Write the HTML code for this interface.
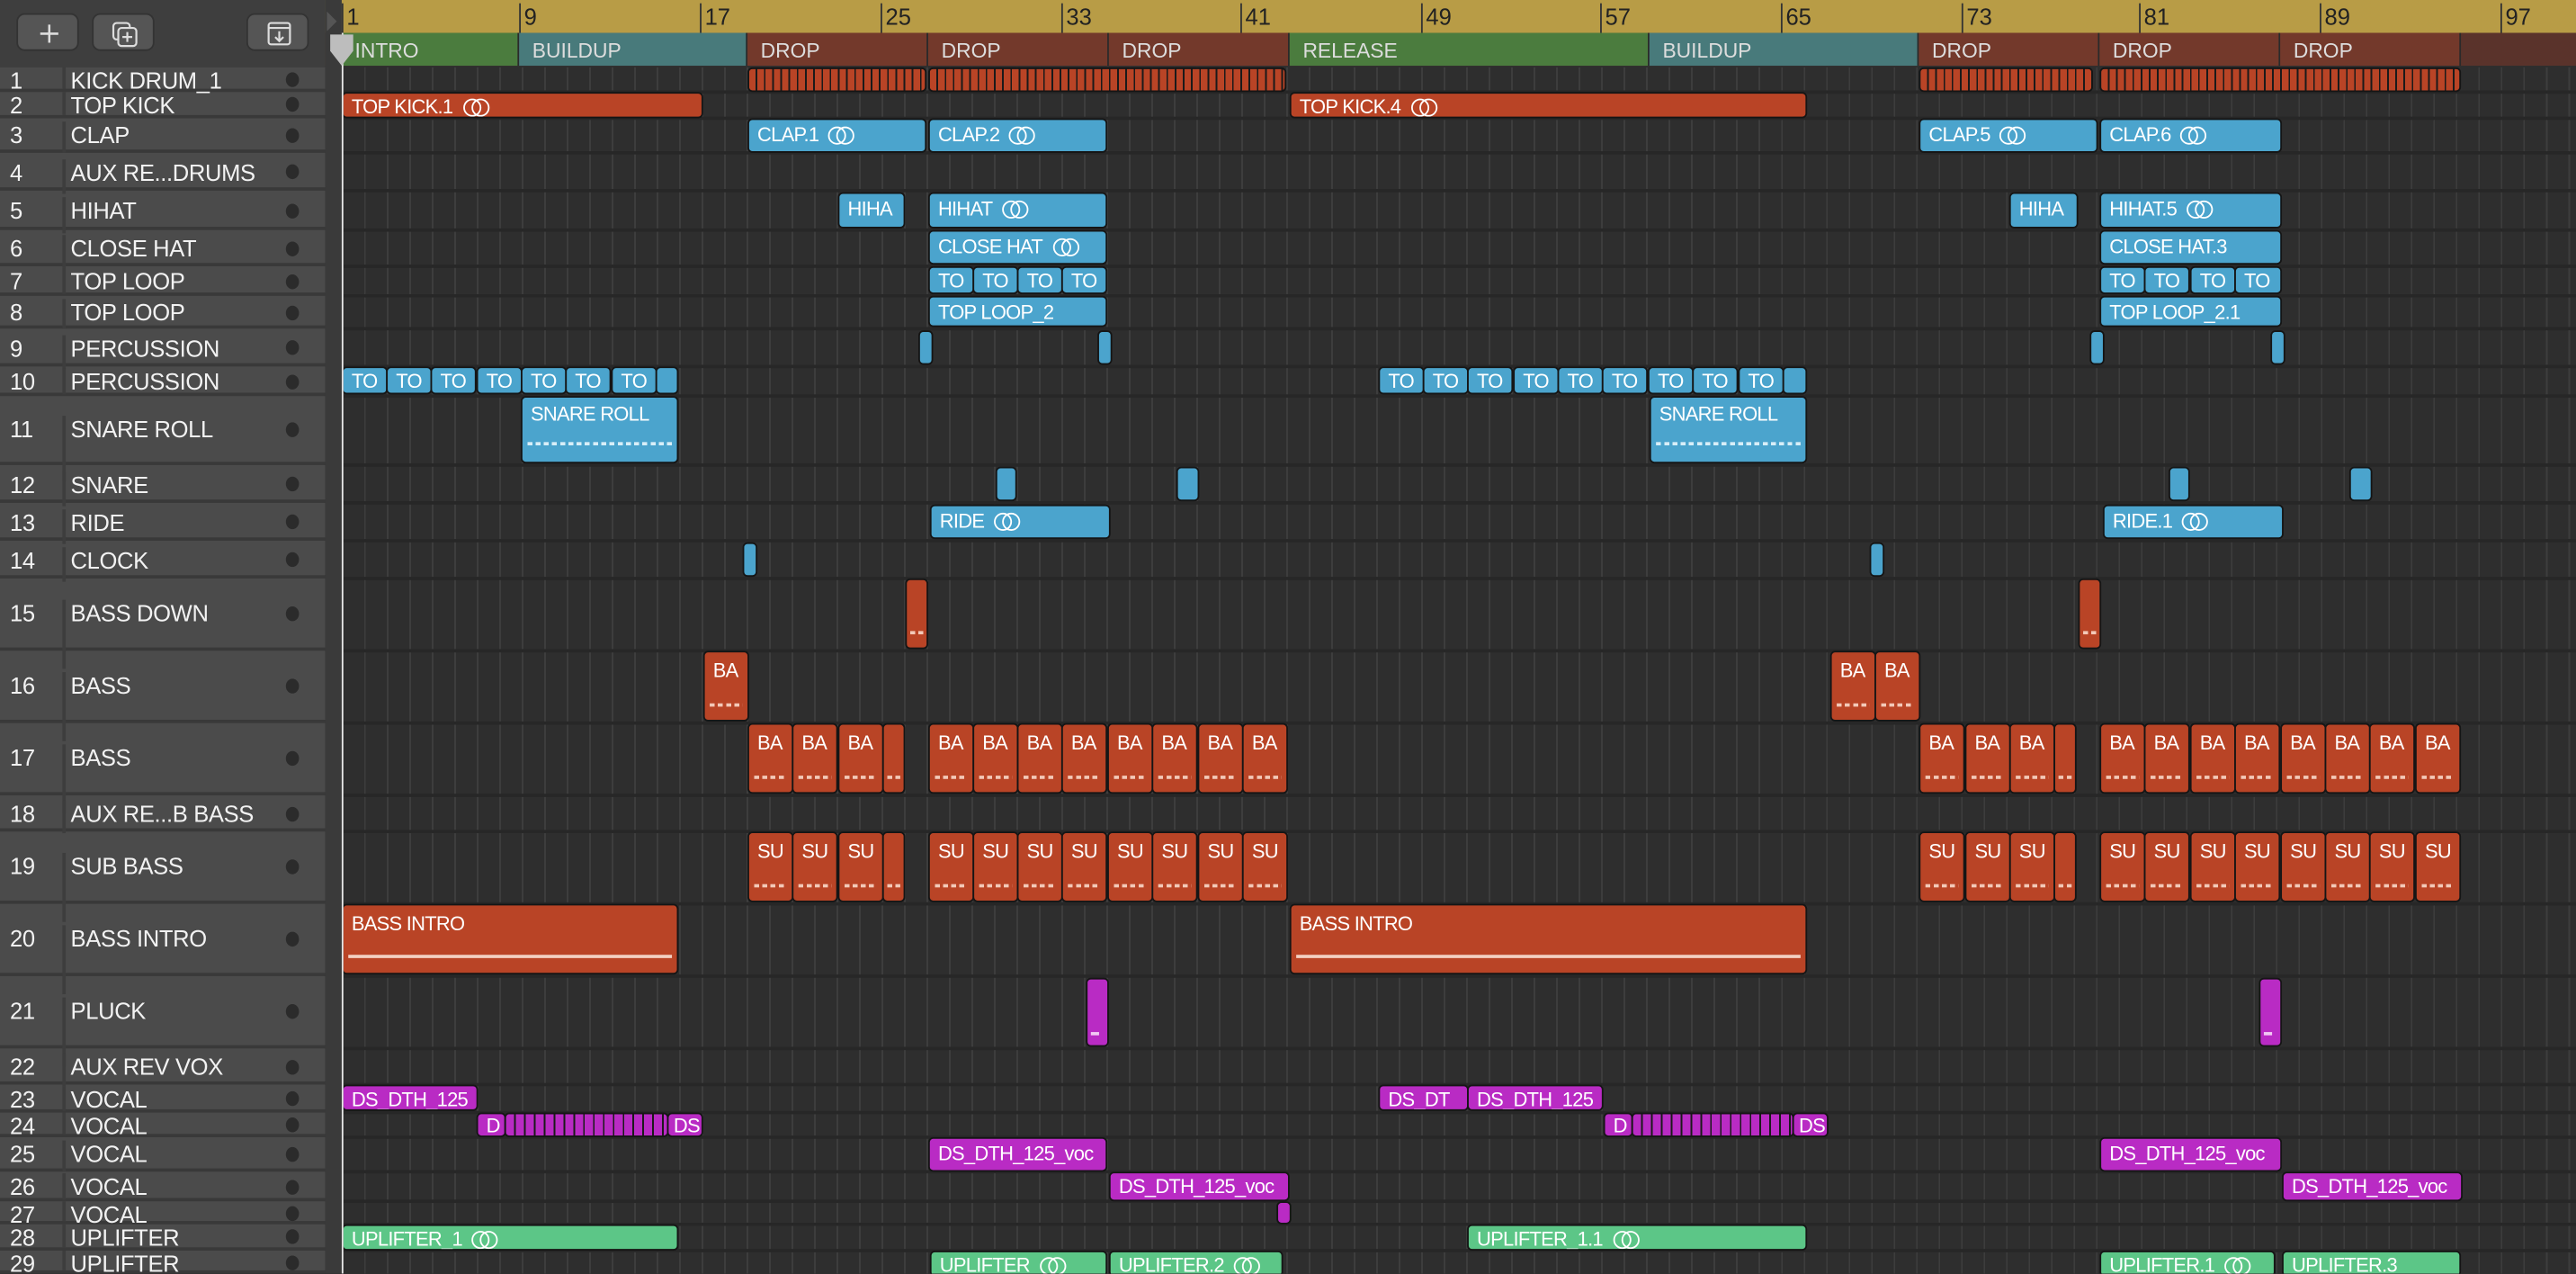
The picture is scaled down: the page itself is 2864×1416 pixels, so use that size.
<!DOCTYPE html>
<html><head><meta charset="utf-8"><style>
*{margin:0;padding:0;box-sizing:border-box}
html,body{width:2864px;height:1416px;overflow:hidden;background:#2e2e2e}
#w{position:absolute;left:0;top:0;width:1568px;height:775px;transform:scale(1.82653);transform-origin:0 0;font-family:"Liberation Sans",sans-serif;overflow:hidden}
.grid{position:absolute;left:208px;top:41px;width:1360px;height:734px;background:repeating-linear-gradient(90deg,#3d3d3d 0 1px,transparent 1px 13.69px)}
.rl{position:absolute;left:198px;width:1370px;height:2px;background:#272727}
.lp{position:absolute;left:0;top:0;width:198px;height:775px;background:#4b4b4b}
.hd{position:absolute;left:0;top:0;width:198px;height:41px;background:#3e3e3e}
.btn{position:absolute;top:8px;height:23px;width:38px;border-radius:5px;background:#555;border:1px solid #333}
.tr{position:absolute;left:0;width:198px;color:#f2f2f2;font-size:14px;letter-spacing:-0.2px;border-bottom:2px solid #393939}
.tr .n{position:absolute;left:0;width:40px;text-align:left;padding-left:6px;height:100%;border-right:2px solid #3d3d3d}
.tr .t{position:absolute;left:43px;white-space:nowrap}
.tr .d{position:absolute;left:174px;width:8px;height:9px;border-radius:50%;background:#2b2b2b}
.c{position:absolute;border-radius:3px;border:1px solid #151515;color:#fff;font-size:12px;letter-spacing:-0.4px;padding:2px 0 0 5px;white-space:nowrap;overflow:hidden;line-height:14px}
.r{background:#b94426}.b{background:#4ba4cd}.p{background:#b92bc4}.g{background:#5cc687}
.lo{display:inline-block;width:14px;height:10px;position:relative;margin-left:6px;vertical-align:-1px}
.lo:before,.lo:after{content:"";position:absolute;top:0;width:9px;height:9px;border:1.3px solid #fff;border-radius:50%}
.lo:before{left:0}.lo:after{left:5px}
.sec{position:absolute;top:20px;height:20px;color:#ddd;font-size:12.5px;padding:4px 0 0 8px;border-right:1px solid #2a2a2a}
.ml{position:absolute;top:2px;font-size:14px;color:#222}
.mt{position:absolute;top:2px;width:1px;height:18px;background:#333}
.st{background-image:repeating-linear-gradient(90deg,#b94426 0 4px,#1a1a1a 4px 5px)}
.dash{position:absolute;left:3px;right:3px;bottom:8px;height:2px;background:repeating-linear-gradient(90deg,#f3c9b8 0 3px,transparent 3px 5px)}
</style></head><body><div id="w">
<div class="grid"></div>
<div style="position:absolute;left:198px;top:0;width:1370px;height:20px;background:#b89c46"></div>
<div class="mt" style="left:208px"></div><div class="ml" style="left:211px">1</div>
<div class="mt" style="left:316px"></div><div class="ml" style="left:319px">9</div>
<div class="mt" style="left:426px"></div><div class="ml" style="left:429px">17</div>
<div class="mt" style="left:536px"></div><div class="ml" style="left:539px">25</div>
<div class="mt" style="left:646px"></div><div class="ml" style="left:649px">33</div>
<div class="mt" style="left:755px"></div><div class="ml" style="left:758px">41</div>
<div class="mt" style="left:865px"></div><div class="ml" style="left:868px">49</div>
<div class="mt" style="left:974px"></div><div class="ml" style="left:977px">57</div>
<div class="mt" style="left:1084px"></div><div class="ml" style="left:1087px">65</div>
<div class="mt" style="left:1194px"></div><div class="ml" style="left:1197px">73</div>
<div class="mt" style="left:1302px"></div><div class="ml" style="left:1305px">81</div>
<div class="mt" style="left:1412px"></div><div class="ml" style="left:1415px">89</div>
<div class="mt" style="left:1522px"></div><div class="ml" style="left:1525px">97</div>
<div style="position:absolute;left:198px;top:20px;width:1370px;height:20px;background:#5a332b"></div>
<div class="sec" style="left:208px;width:108px;background:#4b7c3e">INTRO</div>
<div class="sec" style="left:316px;width:139px;background:#487a7b">BUILDUP</div>
<div class="sec" style="left:455px;width:110px;background:#73392b">DROP</div>
<div class="sec" style="left:565px;width:110px;background:#73392b">DROP</div>
<div class="sec" style="left:675px;width:110px;background:#73392b">DROP</div>
<div class="sec" style="left:785px;width:219px;background:#4b7c3e">RELEASE</div>
<div class="sec" style="left:1004px;width:164px;background:#487a7b">BUILDUP</div>
<div class="sec" style="left:1168px;width:110px;background:#73392b">DROP</div>
<div class="sec" style="left:1278px;width:110px;background:#73392b">DROP</div>
<div class="sec" style="left:1388px;width:110px;background:#73392b">DROP</div>
<div class="rl" style="top:55px"></div><div class="rl" style="top:71px"></div><div class="rl" style="top:92px"></div><div class="rl" style="top:115px"></div><div class="rl" style="top:139px"></div><div class="rl" style="top:161px"></div><div class="rl" style="top:179px"></div><div class="rl" style="top:199px"></div><div class="rl" style="top:222px"></div><div class="rl" style="top:240px"></div><div class="rl" style="top:282px"></div><div class="rl" style="top:305px"></div><div class="rl" style="top:328px"></div><div class="rl" style="top:351px"></div><div class="rl" style="top:395px"></div><div class="rl" style="top:439px"></div><div class="rl" style="top:483px"></div><div class="rl" style="top:505px"></div><div class="rl" style="top:549px"></div><div class="rl" style="top:593px"></div><div class="rl" style="top:637px"></div><div class="rl" style="top:659px"></div><div class="rl" style="top:676px"></div><div class="rl" style="top:691px"></div><div class="rl" style="top:712px"></div><div class="rl" style="top:730px"></div><div class="rl" style="top:744px"></div><div class="rl" style="top:760px"></div>
<div class="lp"></div>
<div class="hd"></div>
<div class="btn" style="left:10px"><svg width="38" height="23"><path d="M19 6v11M13.5 11.5h11" stroke="#ddd" stroke-width="1.4"/></svg></div>
<div class="btn" style="left:56px"><svg width="38" height="23"><rect x="12" y="5" width="10" height="10" rx="2" fill="none" stroke="#ddd" stroke-width="1.2"/><rect x="15" y="8" width="11" height="11" rx="2" fill="#555" stroke="#ddd" stroke-width="1.2"/><path d="M20.5 10.5v6M17.5 13.5h6" stroke="#ddd" stroke-width="1.2"/></svg></div>
<div class="btn" style="left:150px"><svg width="38" height="23"><rect x="12.5" y="5" width="13" height="13" rx="1.5" fill="none" stroke="#ddd" stroke-width="1.2"/><path d="M12.5 8h13M19 10v6M16.5 13.5l2.5 2.5 2.5-2.5" fill="none" stroke="#ddd" stroke-width="1.2"/></svg></div>
<div style="position:absolute;left:198px;top:0;width:10px;height:775px;background:#3a3a3a"></div>

<div class="tr" style="top:41px;height:15px"><span class="n">1</span><span class="t">KICK DRUM_1</span><span class="d" style="top:3px"></span></div>
<div class="tr" style="top:56px;height:16px"><span class="n">2</span><span class="t">TOP KICK</span><span class="d" style="top:3px"></span></div>
<div class="tr" style="top:72px;height:21px;padding-top:2px"><span class="n">3</span><span class="t">CLAP</span><span class="d" style="top:6px"></span></div>
<div class="tr" style="top:93px;height:23px;padding-top:4px"><span class="n">4</span><span class="t">AUX RE...DRUMS</span><span class="d" style="top:7px"></span></div>
<div class="tr" style="top:116px;height:24px;padding-top:4px"><span class="n">5</span><span class="t">HIHAT</span><span class="d" style="top:8px"></span></div>
<div class="tr" style="top:140px;height:22px;padding-top:3px"><span class="n">6</span><span class="t">CLOSE HAT</span><span class="d" style="top:7px"></span></div>
<div class="tr" style="top:162px;height:18px;padding-top:1px"><span class="n">7</span><span class="t">TOP LOOP</span><span class="d" style="top:5px"></span></div>
<div class="tr" style="top:180px;height:20px;padding-top:2px"><span class="n">8</span><span class="t">TOP LOOP</span><span class="d" style="top:6px"></span></div>
<div class="tr" style="top:200px;height:23px;padding-top:4px"><span class="n">9</span><span class="t">PERCUSSION</span><span class="d" style="top:7px"></span></div>
<div class="tr" style="top:223px;height:18px;padding-top:1px"><span class="n">10</span><span class="t">PERCUSSION</span><span class="d" style="top:5px"></span></div>
<div class="tr" style="top:241px;height:42px;padding-top:12px"><span class="n">11</span><span class="t">SNARE ROLL</span><span class="d" style="top:16px"></span></div>
<div class="tr" style="top:283px;height:23px;padding-top:4px"><span class="n">12</span><span class="t">SNARE</span><span class="d" style="top:7px"></span></div>
<div class="tr" style="top:306px;height:23px;padding-top:4px"><span class="n">13</span><span class="t">RIDE</span><span class="d" style="top:7px"></span></div>
<div class="tr" style="top:329px;height:23px;padding-top:4px"><span class="n">14</span><span class="t">CLOCK</span><span class="d" style="top:7px"></span></div>
<div class="tr" style="top:352px;height:44px;padding-top:13px"><span class="n">15</span><span class="t">BASS DOWN</span><span class="d" style="top:17px"></span></div>
<div class="tr" style="top:396px;height:44px;padding-top:13px"><span class="n">16</span><span class="t">BASS</span><span class="d" style="top:17px"></span></div>
<div class="tr" style="top:440px;height:44px;padding-top:13px"><span class="n">17</span><span class="t">BASS</span><span class="d" style="top:17px"></span></div>
<div class="tr" style="top:484px;height:22px;padding-top:3px"><span class="n">18</span><span class="t">AUX RE...B BASS</span><span class="d" style="top:7px"></span></div>
<div class="tr" style="top:506px;height:44px;padding-top:13px"><span class="n">19</span><span class="t">SUB BASS</span><span class="d" style="top:17px"></span></div>
<div class="tr" style="top:550px;height:44px;padding-top:13px"><span class="n">20</span><span class="t">BASS INTRO</span><span class="d" style="top:17px"></span></div>
<div class="tr" style="top:594px;height:44px;padding-top:13px"><span class="n">21</span><span class="t">PLUCK</span><span class="d" style="top:17px"></span></div>
<div class="tr" style="top:638px;height:22px;padding-top:3px"><span class="n">22</span><span class="t">AUX REV VOX</span><span class="d" style="top:7px"></span></div>
<div class="tr" style="top:660px;height:17px;padding-top:1px"><span class="n">23</span><span class="t">VOCAL</span><span class="d" style="top:4px"></span></div>
<div class="tr" style="top:677px;height:15px"><span class="n">24</span><span class="t">VOCAL</span><span class="d" style="top:3px"></span></div>
<div class="tr" style="top:692px;height:21px;padding-top:2px"><span class="n">25</span><span class="t">VOCAL</span><span class="d" style="top:6px"></span></div>
<div class="tr" style="top:713px;height:18px;padding-top:1px"><span class="n">26</span><span class="t">VOCAL</span><span class="d" style="top:5px"></span></div>
<div class="tr" style="top:731px;height:14px"><span class="n">27</span><span class="t">VOCAL</span><span class="d" style="top:3px"></span></div>
<div class="tr" style="top:745px;height:16px"><span class="n">28</span><span class="t">UPLIFTER</span><span class="d" style="top:3px"></span></div>
<div class="tr" style="top:761px;height:14px"><span class="n">29</span><span class="t">UPLIFTER</span><span class="d" style="top:3px"></span></div>

<div class="c st" style="left:455px;top:41px;width:109px;height:15px"></div>
<div class="c st" style="left:565px;top:41px;width:218px;height:15px"></div>
<div class="c st" style="left:1168px;top:41px;width:106px;height:15px"></div>
<div class="c st" style="left:1278px;top:41px;width:220px;height:15px"></div>

<div class="c r" style="left:208px;top:56px;width:220px;height:16px;padding-top:1px">TOP KICK.1<span class="lo"></span></div>
<div class="c r" style="left:785px;top:56px;width:315px;height:16px;padding-top:1px">TOP KICK.4<span class="lo"></span></div>

<div class="c b" style="left:455px;top:72px;width:109px;height:21px">CLAP.1<span class="lo"></span></div>
<div class="c b" style="left:565px;top:72px;width:109px;height:21px">CLAP.2<span class="lo"></span></div>
<div class="c b" style="left:1168px;top:72px;width:109px;height:21px">CLAP.5<span class="lo"></span></div>
<div class="c b" style="left:1278px;top:72px;width:111px;height:21px">CLAP.6<span class="lo"></span></div>

<div class="c b" style="left:510px;top:117px;width:41px;height:22px">HIHA</div>
<div class="c b" style="left:565px;top:117px;width:109px;height:22px">HIHAT<span class="lo"></span></div>
<div class="c b" style="left:1223px;top:117px;width:42px;height:22px">HIHA</div>
<div class="c b" style="left:1278px;top:117px;width:111px;height:22px">HIHAT.5<span class="lo"></span></div>

<div class="c b" style="left:565px;top:140px;width:109px;height:21px">CLOSE HAT<span class="lo"></span></div>
<div class="c b" style="left:1278px;top:140px;width:111px;height:21px">CLOSE HAT.3</div>

<div class="c b" style="left:565px;top:162px;width:28px;height:17px;padding-top:1px">TO</div>
<div class="c b" style="left:592px;top:162px;width:28px;height:17px;padding-top:1px">TO</div>
<div class="c b" style="left:619px;top:162px;width:28px;height:17px;padding-top:1px">TO</div>
<div class="c b" style="left:646px;top:162px;width:28px;height:17px;padding-top:1px">TO</div>
<div class="c b" style="left:1278px;top:162px;width:28px;height:17px;padding-top:1px">TO</div>
<div class="c b" style="left:1305px;top:162px;width:28px;height:17px;padding-top:1px">TO</div>
<div class="c b" style="left:1333px;top:162px;width:28px;height:17px;padding-top:1px">TO</div>
<div class="c b" style="left:1360px;top:162px;width:29px;height:17px;padding-top:1px">TO</div>

<div class="c b" style="left:565px;top:180px;width:109px;height:19px">TOP LOOP_2</div>
<div class="c b" style="left:1278px;top:180px;width:111px;height:19px">TOP LOOP_2.1</div>

<div class="c b" style="left:559px;top:201px;width:9px;height:21px"></div>
<div class="c b" style="left:668px;top:201px;width:9px;height:21px"></div>
<div class="c b" style="left:1272px;top:201px;width:9px;height:21px"></div>
<div class="c b" style="left:1382px;top:201px;width:9px;height:21px"></div>

<div class="c b" style="left:208px;top:223px;width:28px;height:17px;padding-top:1px">TO</div>
<div class="c b" style="left:235px;top:223px;width:28px;height:17px;padding-top:1px">TO</div>
<div class="c b" style="left:262px;top:223px;width:28px;height:17px;padding-top:1px">TO</div>
<div class="c b" style="left:290px;top:223px;width:28px;height:17px;padding-top:1px">TO</div>
<div class="c b" style="left:317px;top:223px;width:28px;height:17px;padding-top:1px">TO</div>
<div class="c b" style="left:344px;top:223px;width:28px;height:17px;padding-top:1px">TO</div>
<div class="c b" style="left:372px;top:223px;width:28px;height:17px;padding-top:1px">TO</div>
<div class="c b" style="left:399px;top:223px;width:14px;height:17px"></div>
<div class="c b" style="left:839px;top:223px;width:28px;height:17px;padding-top:1px">TO</div>
<div class="c b" style="left:866px;top:223px;width:28px;height:17px;padding-top:1px">TO</div>
<div class="c b" style="left:893px;top:223px;width:28px;height:17px;padding-top:1px">TO</div>
<div class="c b" style="left:921px;top:223px;width:28px;height:17px;padding-top:1px">TO</div>
<div class="c b" style="left:948px;top:223px;width:28px;height:17px;padding-top:1px">TO</div>
<div class="c b" style="left:975px;top:223px;width:28px;height:17px;padding-top:1px">TO</div>
<div class="c b" style="left:1003px;top:223px;width:28px;height:17px;padding-top:1px">TO</div>
<div class="c b" style="left:1030px;top:223px;width:28px;height:17px;padding-top:1px">TO</div>
<div class="c b" style="left:1058px;top:223px;width:28px;height:17px;padding-top:1px">TO</div>
<div class="c b" style="left:1085px;top:223px;width:15px;height:17px"></div>

<div class="c b" style="left:317px;top:241px;width:96px;height:41px;padding-top:3px">SNARE ROLL<div class="dash" style="bottom:10px;background:repeating-linear-gradient(90deg,#d8eef8 0 3px,transparent 3px 5px)"></div></div>
<div class="c b" style="left:1004px;top:241px;width:96px;height:41px;padding-top:3px">SNARE ROLL<div class="dash" style="bottom:10px;background:repeating-linear-gradient(90deg,#d8eef8 0 3px,transparent 3px 5px)"></div></div>

<div class="c b" style="left:606px;top:284px;width:13px;height:21px"></div>
<div class="c b" style="left:716px;top:284px;width:14px;height:21px"></div>
<div class="c b" style="left:1320px;top:284px;width:13px;height:21px"></div>
<div class="c b" style="left:1430px;top:284px;width:14px;height:21px"></div>

<div class="c b" style="left:566px;top:307px;width:110px;height:21px">RIDE<span class="lo"></span></div>
<div class="c b" style="left:1280px;top:307px;width:110px;height:21px">RIDE.1<span class="lo"></span></div>

<div class="c b" style="left:452px;top:330px;width:9px;height:21px"></div>
<div class="c b" style="left:1138px;top:330px;width:9px;height:21px"></div>

<div class="c r" style="left:551px;top:352px;width:14px;height:43px"><div class="dash" style="left:2px;right:2px"></div></div>
<div class="c r" style="left:1265px;top:352px;width:14px;height:43px"><div class="dash" style="left:2px;right:2px"></div></div>

<div class="c r" style="left:428px;top:396px;width:28px;height:43px;padding-top:4px">BA<div class="dash"></div></div>
<div class="c r" style="left:1114px;top:396px;width:28px;height:43px;padding-top:4px">BA<div class="dash"></div></div>
<div class="c r" style="left:1141px;top:396px;width:28px;height:43px;padding-top:4px">BA<div class="dash"></div></div>

<div class="c r" style="left:455px;top:440px;width:28px;height:43px;padding-top:4px">BA<div class="dash"></div></div>
<div class="c r" style="left:482px;top:440px;width:28px;height:43px;padding-top:4px">BA<div class="dash"></div></div>
<div class="c r" style="left:510px;top:440px;width:28px;height:43px;padding-top:4px">BA<div class="dash"></div></div>
<div class="c r" style="left:537px;top:440px;width:14px;height:43px"><div class="dash" style="left:2px;right:2px"></div></div>
<div class="c r" style="left:565px;top:440px;width:28px;height:43px;padding-top:4px">BA<div class="dash"></div></div>
<div class="c r" style="left:592px;top:440px;width:28px;height:43px;padding-top:4px">BA<div class="dash"></div></div>
<div class="c r" style="left:619px;top:440px;width:28px;height:43px;padding-top:4px">BA<div class="dash"></div></div>
<div class="c r" style="left:646px;top:440px;width:28px;height:43px;padding-top:4px">BA<div class="dash"></div></div>
<div class="c r" style="left:674px;top:440px;width:28px;height:43px;padding-top:4px">BA<div class="dash"></div></div>
<div class="c r" style="left:701px;top:440px;width:28px;height:43px;padding-top:4px">BA<div class="dash"></div></div>
<div class="c r" style="left:729px;top:440px;width:28px;height:43px;padding-top:4px">BA<div class="dash"></div></div>
<div class="c r" style="left:756px;top:440px;width:28px;height:43px;padding-top:4px">BA<div class="dash"></div></div>
<div class="c r" style="left:1168px;top:440px;width:28px;height:43px;padding-top:4px">BA<div class="dash"></div></div>
<div class="c r" style="left:1196px;top:440px;width:28px;height:43px;padding-top:4px">BA<div class="dash"></div></div>
<div class="c r" style="left:1223px;top:440px;width:28px;height:43px;padding-top:4px">BA<div class="dash"></div></div>
<div class="c r" style="left:1250px;top:440px;width:14px;height:43px"><div class="dash" style="left:2px;right:2px"></div></div>
<div class="c r" style="left:1278px;top:440px;width:28px;height:43px;padding-top:4px">BA<div class="dash"></div></div>
<div class="c r" style="left:1305px;top:440px;width:28px;height:43px;padding-top:4px">BA<div class="dash"></div></div>
<div class="c r" style="left:1333px;top:440px;width:28px;height:43px;padding-top:4px">BA<div class="dash"></div></div>
<div class="c r" style="left:1360px;top:440px;width:28px;height:43px;padding-top:4px">BA<div class="dash"></div></div>
<div class="c r" style="left:1388px;top:440px;width:28px;height:43px;padding-top:4px">BA<div class="dash"></div></div>
<div class="c r" style="left:1415px;top:440px;width:28px;height:43px;padding-top:4px">BA<div class="dash"></div></div>
<div class="c r" style="left:1442px;top:440px;width:28px;height:43px;padding-top:4px">BA<div class="dash"></div></div>
<div class="c r" style="left:1470px;top:440px;width:28px;height:43px;padding-top:4px">BA<div class="dash"></div></div>

<div class="c r" style="left:455px;top:506px;width:28px;height:43px;padding-top:4px">SU<div class="dash"></div></div>
<div class="c r" style="left:482px;top:506px;width:28px;height:43px;padding-top:4px">SU<div class="dash"></div></div>
<div class="c r" style="left:510px;top:506px;width:28px;height:43px;padding-top:4px">SU<div class="dash"></div></div>
<div class="c r" style="left:537px;top:506px;width:14px;height:43px"><div class="dash" style="left:2px;right:2px"></div></div>
<div class="c r" style="left:565px;top:506px;width:28px;height:43px;padding-top:4px">SU<div class="dash"></div></div>
<div class="c r" style="left:592px;top:506px;width:28px;height:43px;padding-top:4px">SU<div class="dash"></div></div>
<div class="c r" style="left:619px;top:506px;width:28px;height:43px;padding-top:4px">SU<div class="dash"></div></div>
<div class="c r" style="left:646px;top:506px;width:28px;height:43px;padding-top:4px">SU<div class="dash"></div></div>
<div class="c r" style="left:674px;top:506px;width:28px;height:43px;padding-top:4px">SU<div class="dash"></div></div>
<div class="c r" style="left:701px;top:506px;width:28px;height:43px;padding-top:4px">SU<div class="dash"></div></div>
<div class="c r" style="left:729px;top:506px;width:28px;height:43px;padding-top:4px">SU<div class="dash"></div></div>
<div class="c r" style="left:756px;top:506px;width:28px;height:43px;padding-top:4px">SU<div class="dash"></div></div>
<div class="c r" style="left:1168px;top:506px;width:28px;height:43px;padding-top:4px">SU<div class="dash"></div></div>
<div class="c r" style="left:1196px;top:506px;width:28px;height:43px;padding-top:4px">SU<div class="dash"></div></div>
<div class="c r" style="left:1223px;top:506px;width:28px;height:43px;padding-top:4px">SU<div class="dash"></div></div>
<div class="c r" style="left:1250px;top:506px;width:14px;height:43px"><div class="dash" style="left:2px;right:2px"></div></div>
<div class="c r" style="left:1278px;top:506px;width:28px;height:43px;padding-top:4px">SU<div class="dash"></div></div>
<div class="c r" style="left:1305px;top:506px;width:28px;height:43px;padding-top:4px">SU<div class="dash"></div></div>
<div class="c r" style="left:1333px;top:506px;width:28px;height:43px;padding-top:4px">SU<div class="dash"></div></div>
<div class="c r" style="left:1360px;top:506px;width:28px;height:43px;padding-top:4px">SU<div class="dash"></div></div>
<div class="c r" style="left:1388px;top:506px;width:28px;height:43px;padding-top:4px">SU<div class="dash"></div></div>
<div class="c r" style="left:1415px;top:506px;width:28px;height:43px;padding-top:4px">SU<div class="dash"></div></div>
<div class="c r" style="left:1442px;top:506px;width:28px;height:43px;padding-top:4px">SU<div class="dash"></div></div>
<div class="c r" style="left:1470px;top:506px;width:28px;height:43px;padding-top:4px">SU<div class="dash"></div></div>

<div class="c r" style="left:208px;top:550px;width:205px;height:43px;padding-top:4px">BASS INTRO<div style="position:absolute;left:3px;right:3px;bottom:9px;height:2px;background:#f3d0c2"></div></div>
<div class="c r" style="left:785px;top:550px;width:315px;height:43px;padding-top:4px">BASS INTRO<div style="position:absolute;left:3px;right:3px;bottom:9px;height:2px;background:#f3d0c2"></div></div>

<div class="c p" style="left:661px;top:595px;width:14px;height:42px"><div style="position:absolute;left:2px;width:5px;bottom:6px;height:2px;background:#f2c8f4"></div></div>
<div class="c p" style="left:1375px;top:595px;width:14px;height:42px"><div style="position:absolute;left:2px;width:5px;bottom:6px;height:2px;background:#f2c8f4"></div></div>

<div class="c p" style="left:208px;top:660px;width:83px;height:16px;padding-top:1px">DS_DTH_125</div>
<div class="c p" style="left:839px;top:660px;width:55px;height:16px;padding-top:1px">DS_DT</div>
<div class="c p" style="left:893px;top:660px;width:83px;height:16px;padding-top:1px">DS_DTH_125</div>

<div class="c p" style="left:290px;top:677px;width:18px;height:15px;padding-top:0">D</div>
<div class="c" style="left:307px;top:677px;width:100px;height:15px;background:repeating-linear-gradient(90deg,#b92bc4 0 5px,#1a1a1a 5px 6px)"></div>
<div class="c p" style="left:406px;top:677px;width:22px;height:15px;padding:0 0 0 3px">DS</div>
<div class="c p" style="left:976px;top:677px;width:18px;height:15px;padding-top:0">D</div>
<div class="c" style="left:993px;top:677px;width:99px;height:15px;background:repeating-linear-gradient(90deg,#b92bc4 0 5px,#1a1a1a 5px 6px)"></div>
<div class="c p" style="left:1091px;top:677px;width:22px;height:15px;padding:0 0 0 3px">DS</div>

<div class="c p" style="left:565px;top:692px;width:109px;height:21px">DS_DTH_125_voc</div>
<div class="c p" style="left:1278px;top:692px;width:111px;height:21px">DS_DTH_125_voc</div>
<div class="c p" style="left:675px;top:713px;width:110px;height:18px;padding-top:1px">DS_DTH_125_voc</div>
<div class="c p" style="left:1389px;top:713px;width:110px;height:18px;padding-top:1px">DS_DTH_125_voc</div>
<div class="c p" style="left:777px;top:731px;width:9px;height:14px"></div>

<div class="c g" style="left:208px;top:745px;width:205px;height:16px;padding-top:1px">UPLIFTER_1<span class="lo"></span></div>
<div class="c g" style="left:893px;top:745px;width:207px;height:16px;padding-top:1px">UPLIFTER_1.1<span class="lo"></span></div>
<div class="c g" style="left:566px;top:761px;width:108px;height:16px;padding-top:1px">UPLIFTER<span class="lo"></span></div>
<div class="c g" style="left:675px;top:761px;width:106px;height:16px;padding-top:1px">UPLIFTER.2<span class="lo"></span></div>
<div class="c g" style="left:1278px;top:761px;width:107px;height:16px;padding-top:1px">UPLIFTER.1<span class="lo"></span></div>
<div class="c g" style="left:1389px;top:761px;width:109px;height:16px;padding-top:1px">UPLIFTER.3</div>

<div style="position:absolute;left:207.5px;top:20px;width:1px;height:755px;background:#e8e8e8"></div>
<svg style="position:absolute;left:199px;top:20px" width="18" height="22"><path d="M2 1h14v10l-7 9-7-9z" fill="#bdbdbd"/></svg>
<svg style="position:absolute;left:198px;top:6px" width="10" height="14"><path d="M1 1l6 6-6 6z" fill="#555"/></svg>
</div></body></html>
